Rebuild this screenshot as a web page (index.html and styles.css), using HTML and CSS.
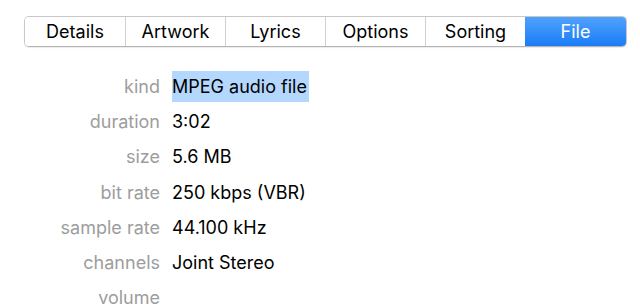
FILE: index.html
```html
<!DOCTYPE html>
<html lang="en">
<head>
    <meta charset="UTF-8">
    <title>File Info</title>
    <link rel="stylesheet" href="styles.css">
</head>
<body>
    <div class="tabs">
        <div class="tab">Details</div>
        <div class="tab">Artwork</div>
        <div class="tab">Lyrics</div>
        <div class="tab">Options</div>
        <div class="tab">Sorting</div>
        <div class="tab selected">File</div>
    </div>

    <div class="info">
        <div class="label">kind</div>
        <div class="value"><span class="highlight">MPEG audio file</span></div>
        <div class="label">duration</div>
        <div class="value">3:02</div>
        <div class="label">size</div>
        <div class="value">5.6 MB</div>
        <div class="label">bit rate</div>
        <div class="value">250 kbps (VBR)</div>
        <div class="label">sample rate</div>
        <div class="value">44.100 kHz</div>
        <div class="label">channels</div>
        <div class="value">Joint Stereo</div>
        <div class="label">volume</div>
        <div class="value"></div>
    </div>
</body>
</html>
```

FILE: styles.css
```css
body {
    margin: 0;
    background: #fff;
    font-family: Inter, "Noto Sans", sans-serif;
    color: #000;
    overflow: hidden;
}

.tabs {
    display: grid;
    grid-template-columns: repeat(5, 100px) 1fr;
    margin: 16px 0 0 24px;
    width: 601px;
    height: 29px;
    border: 1px solid #c8c8c8;
    border-bottom-color: #b4b4b4;
    border-radius: 5px;
    box-shadow: 0 1px 1px rgba(0, 0, 0, 0.08);
    overflow: hidden;
}
.tab {
    box-sizing: border-box;
    display: flex;
    justify-content: center;
    align-items: center;
    font-size: 18px;
    border-left: 1px solid #d0d0d0;
    background: #fff;
}
.tab:first-child {
    border-left: none;
}
.tab.selected {
    color: #fff;
    border-left: none;
    background: linear-gradient(#50a2fc, #1a7cf7);
}

.info {
    display: grid;
    grid-template-columns: 160px auto;
    grid-auto-rows: 35.2px;
    column-gap: 12px;
    margin-top: 22px;
    font-size: 18px;
    align-items: center;
}
.label {
    text-align: right;
    color: #9d9d9d;
}
.highlight {
    background: #b4d7fd;
    padding: 5px 2px 5px 0;
}
```
